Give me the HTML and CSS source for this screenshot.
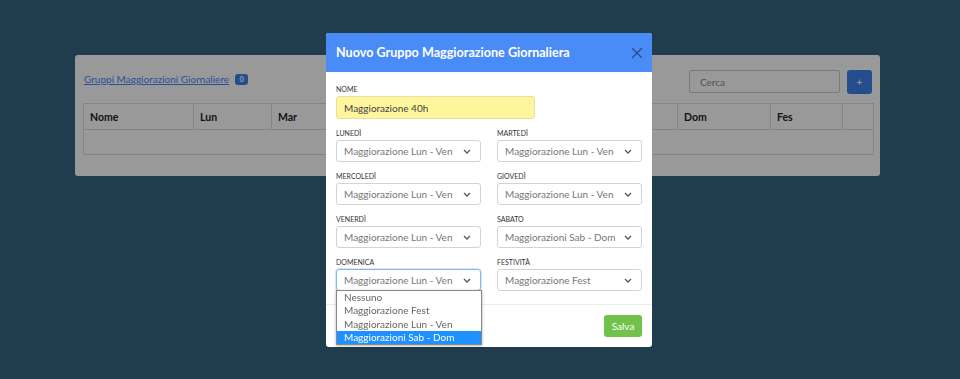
FILE: index.html
```html
<!DOCTYPE html>
<html lang="it">
<head>
    <meta charset="UTF-8">
    <meta name="viewport" content="width=device-width, initial-scale=1.0">
    <title>Gruppi Maggiorazioni Giornaliere</title>
    <link rel="stylesheet" href="styles.css">
</head>
<body>
    <div class="page">
        <div class="card">
            <div class="card-top">
                <div class="card-title">
                    <a href="#">Gruppi Maggiorazioni Giornaliere</a>
                    <span class="badge">0</span>
                </div>
                <div class="card-tools">
                    <input class="search" type="text" placeholder="Cerca">
                    <button class="add">+</button>
                </div>
            </div>
            <table class="grid">
                <colgroup>
                    <col style="width: 110px">
                    <col style="width: 78px">
                    <col style="width: 81px">
                    <col style="width: 81px">
                    <col style="width: 81px">
                    <col style="width: 81px">
                    <col style="width: 82px">
                    <col style="width: 93px">
                    <col style="width: 72px">
                    <col style="width: 31px">
                </colgroup>
                <thead>
                    <tr>
                        <th>Nome</th>
                        <th>Lun</th>
                        <th>Mar</th>
                        <th>Mer</th>
                        <th>Gio</th>
                        <th>Ven</th>
                        <th>Sab</th>
                        <th>Dom</th>
                        <th>Fes</th>
                        <th></th>
                    </tr>
                </thead>
                <tbody>
                    <tr><td colspan="10"></td></tr>
                </tbody>
            </table>
        </div>
    </div>

    <div class="backdrop"></div>

    <div class="modal">
        <div class="modal-header">
            <span class="modal-title">Nuovo Gruppo Maggiorazione Giornaliera</span>
            <button class="close">
                <svg width="12" height="12" viewBox="0 0 12 12"><path d="M1 1 L11 11 M11 1 L1 11" stroke="currentColor" stroke-width="1.4" fill="none"/></svg>
            </button>
        </div>
        <div class="modal-body">
            <div class="field">
                <label>Nome</label>
                <input class="name-input" type="text" value="Maggiorazione 40h">
            </div>
            <div class="form-grid">
                <div class="field">
                    <label>Lunedì</label>
                    <div class="select">Maggiorazione Lun - Ven<svg class="chev" width="8" height="5" viewBox="0 0 8 5"><path d="M1 1 L4 4 L7 1" stroke="currentColor" stroke-width="1.3" fill="none"/></svg></div>
                </div>
                <div class="field">
                    <label>Martedì</label>
                    <div class="select">Maggiorazione Lun - Ven<svg class="chev" width="8" height="5" viewBox="0 0 8 5"><path d="M1 1 L4 4 L7 1" stroke="currentColor" stroke-width="1.3" fill="none"/></svg></div>
                </div>
                <div class="field">
                    <label>Mercoledì</label>
                    <div class="select">Maggiorazione Lun - Ven<svg class="chev" width="8" height="5" viewBox="0 0 8 5"><path d="M1 1 L4 4 L7 1" stroke="currentColor" stroke-width="1.3" fill="none"/></svg></div>
                </div>
                <div class="field">
                    <label>Giovedì</label>
                    <div class="select">Maggiorazione Lun - Ven<svg class="chev" width="8" height="5" viewBox="0 0 8 5"><path d="M1 1 L4 4 L7 1" stroke="currentColor" stroke-width="1.3" fill="none"/></svg></div>
                </div>
                <div class="field">
                    <label>Venerdì</label>
                    <div class="select">Maggiorazione Lun - Ven<svg class="chev" width="8" height="5" viewBox="0 0 8 5"><path d="M1 1 L4 4 L7 1" stroke="currentColor" stroke-width="1.3" fill="none"/></svg></div>
                </div>
                <div class="field">
                    <label>Sabato</label>
                    <div class="select">Maggiorazioni Sab - Dom<svg class="chev" width="8" height="5" viewBox="0 0 8 5"><path d="M1 1 L4 4 L7 1" stroke="currentColor" stroke-width="1.3" fill="none"/></svg></div>
                </div>
                <div class="field dropdown">
                    <label>Domenica</label>
                    <div class="select focus">Maggiorazione Lun - Ven<svg class="chev" width="8" height="5" viewBox="0 0 8 5"><path d="M1 1 L4 4 L7 1" stroke="currentColor" stroke-width="1.3" fill="none"/></svg></div>
                    <ul class="options">
                        <li>Nessuno</li>
                        <li>Maggiorazione Fest</li>
                        <li>Maggiorazione Lun - Ven</li>
                        <li class="active">Maggiorazioni Sab - Dom</li>
                    </ul>
                </div>
                <div class="field">
                    <label>Festività</label>
                    <div class="select">Maggiorazione Fest<svg class="chev" width="8" height="5" viewBox="0 0 8 5"><path d="M1 1 L4 4 L7 1" stroke="currentColor" stroke-width="1.3" fill="none"/></svg></div>
                </div>
            </div>
        </div>
        <div class="modal-footer">
            <button class="save">Salva</button>
        </div>
    </div>
</body>
</html>
```

FILE: styles.css
```css
body {
    margin: 0;
    font-family: Lato, "Open Sans", sans-serif;
    background: #34667f;
    color: #212529;
    height: 379px;
    overflow: hidden;
}
.page {
    padding: 55px 80px 0 75px;
}
.card {
    background: #fff;
    border-radius: 3px;
    height: 121px;
    padding: 0 7px 0 8px;
    box-sizing: border-box;
}
.card-top {
    display: flex;
    justify-content: space-between;
    align-items: flex-start;
    padding: 15px 0 9px 0;
}
.card-title {
    display: flex;
    align-items: center;
    gap: 6px;
    padding: 3px 0 0 1px;
}
.card-title a {
    color: #3f87ff;
    font-size: 10px;
    text-decoration: underline;
}
.badge {
    background: #3f7fe8;
    color: #fff;
    font-size: 7.5px;
    font-weight: bold;
    border-radius: 3px;
    padding: 1px 4.5px;
}
.card-tools {
    display: flex;
    gap: 7px;
    padding-right: 1px;
}
.search {
    width: 151px;
    height: 23px;
    box-sizing: border-box;
    border: 1px solid #ccc;
    border-radius: 2px;
    padding: 0 10px;
    font-family: inherit;
    font-size: 10px;
}
.search::placeholder {
    color: #888;
}
.add {
    width: 25px;
    height: 24px;
    background: #3f7fe8;
    border: none;
    border-radius: 3px;
    color: #fff;
    font-size: 10px;
    padding: 0;
}
.grid {
    width: 790px;
    table-layout: fixed;
    border-collapse: collapse;
    font-size: 10.5px;
}
.grid th {
    text-align: left;
    font-weight: bold;
    height: 25px;
    padding: 0 6px;
    border: 1px solid #dcdcdc;
}
.grid td {
    height: 22px;
    border: 1px solid #dcdcdc;
}

.backdrop {
    position: fixed;
    inset: 0;
    background: rgba(0, 0, 0, 0.4);
}
.modal {
    position: absolute;
    top: 33px;
    left: 326px;
    width: 326px;
    background: #fff;
    border-radius: 3px;
}
.modal-header {
    display: flex;
    justify-content: space-between;
    align-items: center;
    height: 39px;
    padding: 0 9px 0 10px;
    background: #4a8cf7;
    border-radius: 3px 3px 0 0;
}
.modal-title {
    color: #fff;
    font-size: 12.6px;
    font-weight: bold;
}
.close {
    background: none;
    border: none;
    padding: 0;
    color: #2a4f8c;
    display: flex;
}
.modal-body {
    padding: 12px 10px 13px 10px;
}
.field {
    display: flex;
    flex-direction: column;
    margin-bottom: 9px;
}
.form-grid .field:nth-last-child(-n+2) {
    margin-bottom: 0;
}
.field label {
    font-size: 7px;
    text-transform: uppercase;
    color: #333;
    height: 10px;
    line-height: 10px;
    margin-bottom: 2px;
}
.name-input {
    width: 199px;
    height: 23px;
    box-sizing: border-box;
    background: #fff59d;
    border: 1px solid #e6e0a0;
    border-radius: 3px;
    padding: 0 7px;
    font-family: inherit;
    font-size: 10px;
    color: #444;
}
.form-grid {
    display: grid;
    grid-template-columns: 145px 145px;
    column-gap: 16px;
}
.select {
    position: relative;
    height: 22px;
    box-sizing: border-box;
    border: 1px solid #cfd4da;
    border-radius: 3px;
    padding: 0 7px;
    font-size: 10px;
    line-height: 20px;
    color: #777;
}
.select.focus {
    border-color: #8ab4f0;
    box-shadow: 0 0 0 1px #d6e5fc;
}
.chev {
    position: absolute;
    right: 9px;
    top: 8px;
    color: #555;
}
.dropdown {
    position: relative;
}
.options {
    position: absolute;
    top: 33px;
    left: 0;
    width: 146px;
    box-sizing: border-box;
    margin: 0;
    padding: 0;
    list-style: none;
    background: #fff;
    border: 1px solid #888;
    box-shadow: 0 1px 3px rgba(0, 0, 0, 0.3);
    z-index: 2;
}
.options li {
    font-size: 10px;
    line-height: 13.3px;
    padding: 0 7px;
    color: #666;
}
.options li.active {
    background: #1e90ff;
    color: #fff;
}
.modal-footer {
    display: flex;
    justify-content: flex-end;
    border-top: 1px solid #e9ecef;
    padding: 10px 10px 10px 10px;
}
.save {
    background: #70c24a;
    color: #fff;
    border: none;
    border-radius: 3px;
    height: 22px;
    width: 38px;
    padding: 0;
    font-family: inherit;
    font-size: 10px;
}
```
